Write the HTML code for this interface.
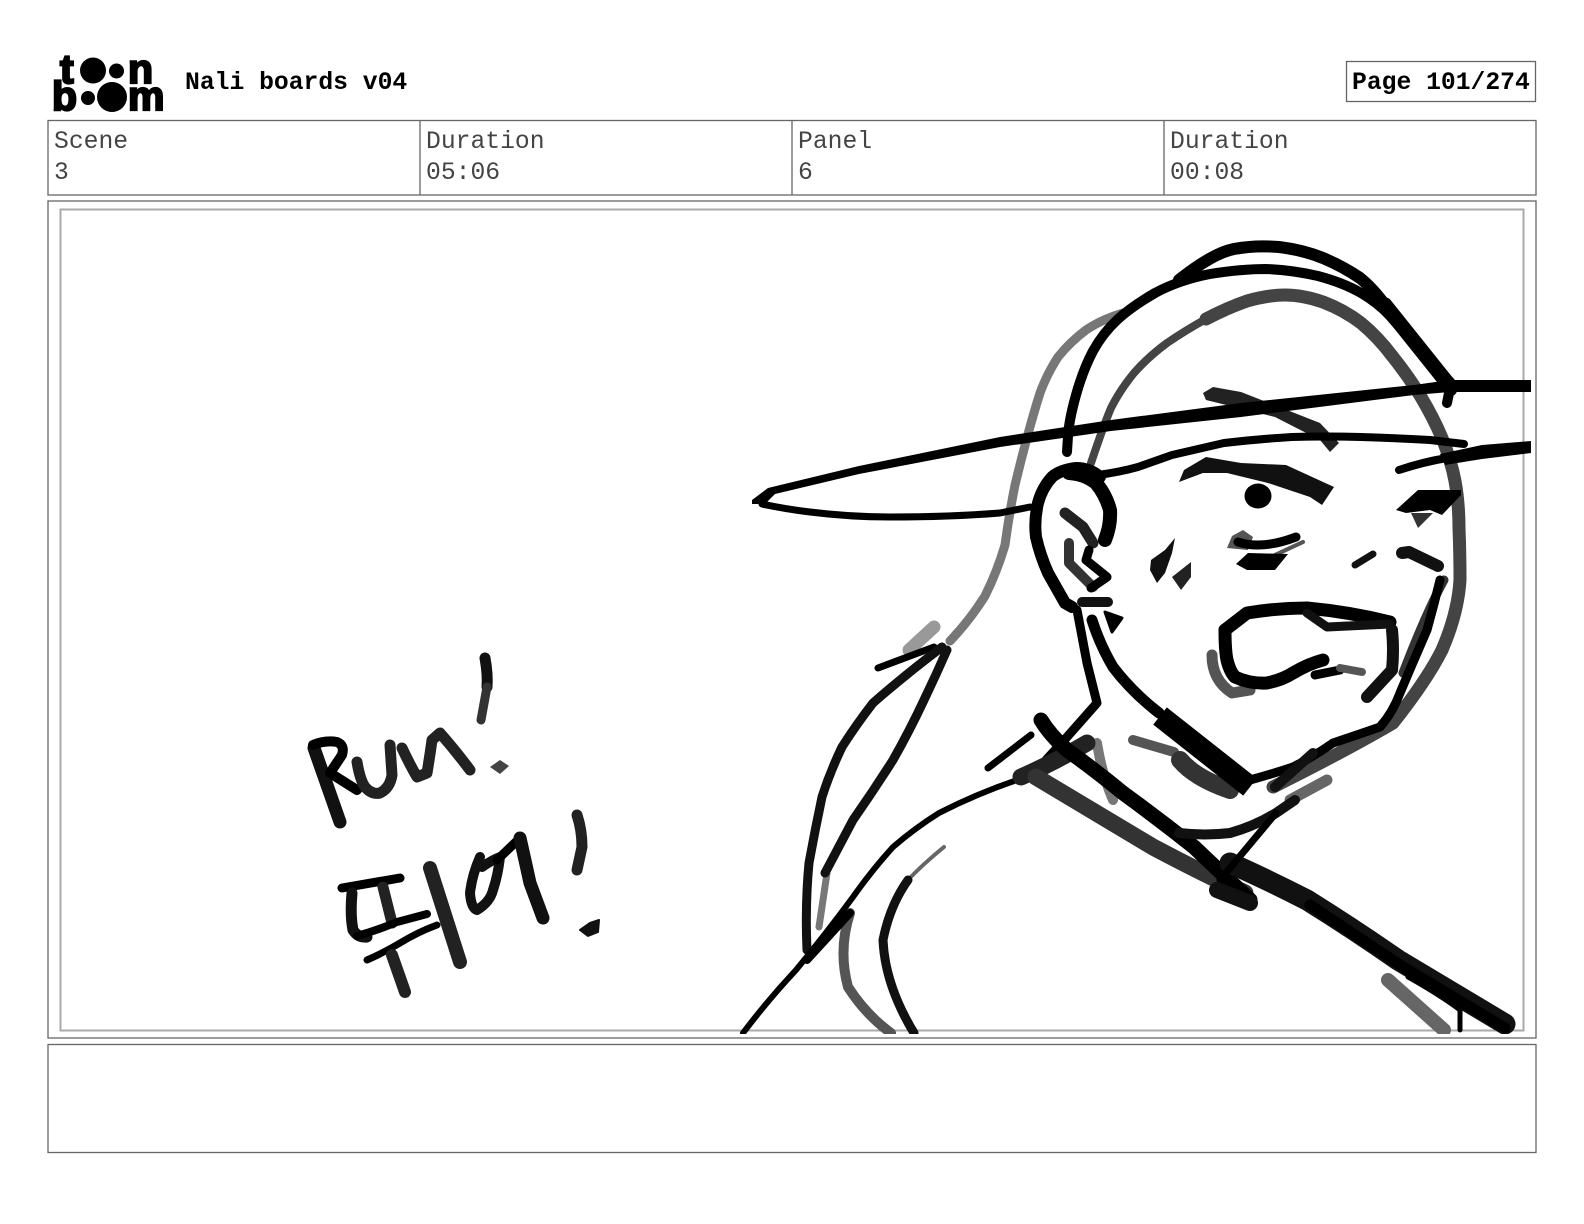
<!DOCTYPE html>
<html lang="en">
<head>
<meta charset="utf-8">
<title>Nali boards v04 - Page 101/274</title>
<style>
html,body{margin:0;padding:0;background:#fff;}
svg{display:block;width:1584px;height:1224px;}
.m{font-family:"Liberation Mono",monospace;font-size:24.7px;fill:#444;}
.b{font-weight:bold;fill:#000;}
.box{fill:none;stroke:#666;stroke-width:1.3;}
.l{font-family:"Liberation Sans",sans-serif;font-weight:bold;stroke:#000;stroke-width:2.2;}
</style>
</head>
<body>
<svg xmlns="http://www.w3.org/2000/svg" width="1584" height="1224" viewBox="0 0 1584 1224">
<rect width="1584" height="1224" fill="#fff"/>

<!-- logo -->
<g fill="#000">
<text class="l" x="60" y="83" font-size="41">t</text>
<circle cx="93" cy="70.5" r="13"/><circle cx="116.5" cy="71" r="7.5"/>
<text class="l" x="128" y="83" font-size="41">n</text>
<text class="l" x="52" y="110" font-size="41">b</text>
<circle cx="88" cy="98" r="7"/><circle cx="112" cy="97" r="15"/>
<text class="l" x="128" y="110" font-size="41">m</text>
</g>

<text class="m b" x="185" y="89">Nali boards v04</text>
<rect class="box" x="1346.5" y="61.5" width="189" height="40"/>
<text class="m b" x="1352" y="89">Page 101/274</text>

<!-- header table -->
<rect class="box" x="48" y="120.5" width="1488" height="74.5"/>
<path class="box" d="M420 120V195M792 120V195M1164 120V195"/>
<text class="m" x="54" y="148">Scene</text><text class="m" x="54" y="179">3</text>
<text class="m" x="426" y="148">Duration</text><text class="m" x="426" y="179">05:06</text>
<text class="m" x="798" y="148">Panel</text><text class="m" x="798" y="179">6</text>
<text class="m" x="1170" y="148">Duration</text><text class="m" x="1170" y="179">00:08</text>

<!-- panel -->
<rect class="box" x="48" y="201" width="1488" height="837"/>
<rect x="60.5" y="209.5" width="1463" height="821" fill="none" stroke="#aaa" stroke-width="2"/>

<!-- notes -->
<rect class="box" x="48" y="1044.5" width="1488" height="108"/>

<defs><clipPath id="c"><rect x="60" y="210" width="1471" height="824"/></clipPath></defs>
<g clip-path="url(#c)" fill="none" stroke-linecap="round" stroke-linejoin="round" role="img" aria-label="Run! sketch">

<!-- gray layer -->
<g stroke="#777">
<path stroke-width="9" d="M1127 312Q1104 318 1086 330Q1070 342 1058 357Q1047 374 1040 393Q1034 412 1028 434Q1021 460 1015 485Q1009 515 1005 545Q997 572 985 596Q970 620 950 641"/>
<path stroke="#999" stroke-width="13" d="M934 627L909 650"/>
<path stroke-width="7" d="M827 873L819 927"/>
<path stroke-width="10" d="M1097 743Q1102 775 1113 800"/>
<path stroke="#555" stroke-width="10" d="M850 913Q838 950 848 987Q866 1015 891 1033"/>
<path stroke="#666" stroke-width="14" d="M1388 980L1444 1030"/>
<path stroke="#666" stroke-width="11" d="M1290 800L1327 780"/>
</g>
<path stroke="#444" stroke-width="8" d="M1091 463Q1103 427 1111 408Q1120 390 1134 373Q1148 357 1167 343Q1186 330 1206 319"/>
<path stroke="#444" stroke-width="13" d="M1206 319Q1227 308 1247 301Q1268 295 1285 295Q1303 295 1323 302Q1344 310 1361 323Q1378 337 1393 357Q1409 377 1421 397Q1433 417 1442 438Q1451 460 1455 481Q1459 503 1459 528Q1460 553 1460 580Q1458 613 1442 650Q1427 680 1393 723Q1347 750 1273 787"/>
<path stroke="#333" stroke-width="9" d="M1444 580Q1426 613 1403 673"/>

<!-- head / hat -->
<g stroke="#000">
<path stroke-width="10" d="M1067 452L1068 436Q1069 420 1076 395Q1083 370 1093 351Q1103 333 1117 320Q1131 307 1155 293Q1179 280 1210 274Q1241 269 1266 269Q1292 270 1318 276Q1344 283 1361 293Q1378 303 1390 316Q1402 330 1451 383L1447 403"/>
<path stroke-width="12" d="M1179 280Q1213 253 1234 249Q1255 245 1279 247Q1303 250 1323 258Q1344 267 1360 278Q1375 290 1390 312L1451 390"/>
<path stroke-width="15" d="M1385 305L1445 380"/>
<path fill="#222" stroke="none" d="M1203 393L1213 387L1241 392L1320 423L1339 443L1330 452L1320 440L1275 417L1206 400Z"/>
<path stroke-width="7" d="M762 504Q785 509 810 512Q850 517 890 517Q950 517 1000 513L1030 507"/>
<path stroke-width="8" d="M1098 475Q1120 472 1138 467Q1155 461 1172 455Q1198 449 1224 443Q1258 439 1292 437Q1326 436 1361 437Q1395 438 1430 440L1464 444"/>
<path stroke-width="8" d="M1399 470Q1423 462 1447 458"/>
</g>
<path fill="#000" d="M752 500L768 488L859 466L1000 437L1111 420L1241 403L1414 385L1450 380L1531 380V392L1450 392L1414 395L1241 417L1111 431L1000 447L859 474L775 494L765 504L752 504Z"/>
<path fill="#000" d="M1440 454L1482 445L1531 441V453L1482 459L1445 465Z"/>

<!-- ear -->
<g stroke="#000">
<path stroke-width="12" d="M1100 477Q1090 468 1076 468Q1060 470 1052 477Q1042 488 1038 503Q1034 520 1036 537Q1040 555 1048 573L1065 603L1072 607"/>
<path stroke-width="14" d="M1069 473Q1085 474 1096 483Q1106 495 1110 510Q1111 525 1105 540"/>
<path stroke="#222" stroke-width="11" d="M1065 513L1083 527L1093 543"/>
<path stroke="#333" stroke-width="10" d="M1069 543L1069 563L1093 587"/>
<path stroke="#000" stroke-width="9" d="M1089 550L1086 560L1107 577L1091 588"/>
<path stroke="#111" stroke-width="10" d="M1082 602L1108 602"/>
<path fill="#000" stroke-width="3" d="M1105 612L1122 618L1112 632Z"/>
</g>

<!-- face features -->
<g stroke="#000">
<path fill="#111" stroke="none" d="M1179 482L1184 470L1206 457L1241 463L1286 465L1334 487L1322 505L1310 497L1268 483L1227 473L1203 473Z"/>
<ellipse cx="1258" cy="496" rx="13.5" ry="12.5" fill="#000" stroke="none"/>
<path fill="#555" stroke="none" d="M1232 536L1243 530L1253 537L1248 550L1227 548Z"/>
<path stroke="#555" stroke-width="4" d="M1275 555L1303 542"/>
<path stroke="#000" stroke-width="9" d="M1238 542Q1262 550 1296 537"/>
<path fill="#000" stroke="none" d="M1236 564L1248 553L1288 554L1275 570L1247 570Z"/>
<path fill="#111" stroke="none" d="M1175 538L1165 550L1151 560L1150 570L1157 583L1165 573L1172 553Z"/>
<path fill="#222" stroke="none" d="M1191 562L1172 577L1181 590L1191 577Z"/>
<path stroke="#111" stroke-width="7" d="M1355 565L1373 554"/>
<path fill="#000" stroke="none" d="M1396 510L1418 490L1461 490L1461 495L1442 515L1430 510L1406 513Z"/>
<path fill="#333" stroke="none" d="M1411 513L1418 528L1433 513Z"/>
<path stroke="#111" stroke-width="12" d="M1402 553L1409 552L1438 566"/>
</g>

<!-- mouth -->
<g stroke="#000">
<path stroke="#555" stroke-width="11" d="M1212 655Q1212 680 1232 693L1250 690"/>
<path stroke-width="13" d="M1225 630L1247 613Q1277 608 1307 608Q1350 612 1390 622"/>
<path stroke-width="13" d="M1225 630Q1225 650 1227 660Q1230 672 1235 677Q1250 684 1267 683Q1282 680 1293 673Q1308 664 1323 660"/>
<path stroke="#111" stroke-width="9" d="M1307 613L1327 627L1390 624"/>
<path stroke="#111" stroke-width="12" d="M1392 630Q1394 650 1392 670L1367 697"/>
<path stroke="#000" stroke-width="9" d="M1315 675L1340 670"/>
<path stroke="#555" stroke-width="8" d="M1340 668L1362 672"/>
</g>

<!-- jaw & neck -->
<g stroke="#000">
<path stroke="#555" stroke-width="10" d="M1133 740L1174 752"/>
<path stroke="#333" stroke-width="18" d="M1180 760Q1195 778 1230 790"/>
<path stroke-width="9" d="M1077 610L1087 663L1097 703L1067 737L1046 760"/>
<path stroke-width="11" d="M1092 620Q1100 645 1113 667Q1132 692 1159 713"/>
<path stroke-width="22" stroke-linecap="butt" d="M1160 716L1250 787"/>
<path stroke="#000" stroke-width="9" d="M1250 780Q1272 774 1293 767Q1313 757 1333 743Q1357 735 1380 727Q1393 712 1400 693Q1413 662 1427 630Q1434 605 1440 580"/>
<path stroke="#111" stroke-width="10" d="M1275 787L1313 753"/>

<!-- hair lock -->
<path stroke-width="7" d="M878 668L934 647"/>
<path stroke="#111" stroke-width="9" d="M942 647Q905 675 873 703Q856 725 842 747Q830 772 822 797Q815 830 809 863Q805 905 807 950"/>
<path stroke="#111" stroke-width="9" d="M947 650Q936 675 924 700Q910 730 893 760Q874 790 853 820L825 873"/>

<!-- shoulder -->
<path stroke-width="6" d="M743 1033Q768 1000 796 970Q825 935 853 897Q872 870 893 847Q915 828 939 813Q980 792 1026 777"/>
<path stroke="#222" stroke-width="17" d="M1021 777Q1055 762 1087 743"/>
<path stroke="#000" stroke-width="8" d="M850 913L807 960"/>
<path stroke="#666" stroke-width="4" d="M944 847Q922 865 908 880"/>
<path stroke="#111" stroke-width="9" d="M908 880Q890 905 883 940Q885 985 914 1033"/>

<!-- straps -->
<path stroke="#333" stroke-width="17" d="M1036 777Q1095 812 1153 847Q1200 872 1245 893"/>
<path stroke-width="15" d="M1041 720Q1050 735 1067 750Q1095 770 1123 793Q1160 820 1194 847L1250 900"/>
<path stroke="#111" stroke-width="21" d="M1230 863Q1268 880 1307 900Q1355 930 1398 960L1505 1024"/>
<path stroke="#000" stroke-width="11" d="M1310 905L1400 965L1505 1028"/>
<path stroke="#000" stroke-width="7" d="M988 768L1031 735"/>
<path stroke="#111" stroke-width="10" d="M1179 833Q1205 836 1230 833Q1255 826 1276 813L1295 800"/>
<path stroke="#000" stroke-width="7" d="M1276 813L1220 880"/>
<path stroke="#111" stroke-width="16" d="M1217 890L1250 903"/>
<path stroke="#000" stroke-width="5" d="M1408 977Q1440 995 1460 1010L1460 1030"/>
</g>

<!-- handwritten -->
<g stroke="#000">
<path stroke="#111" stroke-width="13" d="M314 748L340 822"/>
<path stroke-width="10" d="M313 745Q325 740 337 742Q345 745 342 755L330 773L357 790"/>
<path stroke="#222" stroke-width="11" d="M357 762Q360 780 365 787Q372 795 380 793Q390 788 392 775L390 745"/>
<path stroke="#222" stroke-width="11" d="M402 748Q410 765 417 777L427 773Q430 755 432 740L440 733Q455 750 470 770"/>
<path stroke="#111" stroke-width="11" d="M485 658Q488 675 487 687"/>
<path stroke="#333" stroke-width="9" d="M487 687L481 720"/>
<path fill="#444" stroke="none" d="M490 767L500 760L509 766L500 774Z"/>

<path stroke-width="9" d="M342 888L400 878"/>
<path stroke="#111" stroke-width="11" d="M352 893Q350 915 353 930Q358 938 367 937"/>
<path stroke="#222" stroke-width="11" d="M383 887L392 923"/>
<path stroke-width="8" d="M357 936Q378 930 397 922L427 914"/>
<path stroke-width="7" d="M367 960Q385 952 400 943Q418 932 437 925"/>
<path stroke="#222" stroke-width="12" d="M392 955L405 992"/>
<path stroke="#222" stroke-width="14" d="M430 868L460 962"/>
<path stroke="#111" stroke-width="10" d="M480 857Q472 875 470 893Q471 908 477 910Q490 902 493 890Q498 875 500 857Q492 860 482 867"/>
<path stroke="#000" stroke-width="9" d="M520 838L497 860"/>
<path stroke="#111" stroke-width="13" d="M520 838Q525 860 530 883L543 918"/>
<path stroke="#222" stroke-width="11" d="M577 815Q582 830 582 847L577 870"/>
<path fill="#111" stroke="#111" stroke-width="2" d="M580 930L590 923L599 920L598 932L588 936Z"/>
</g>
</g>
</svg>
</body>
</html>
